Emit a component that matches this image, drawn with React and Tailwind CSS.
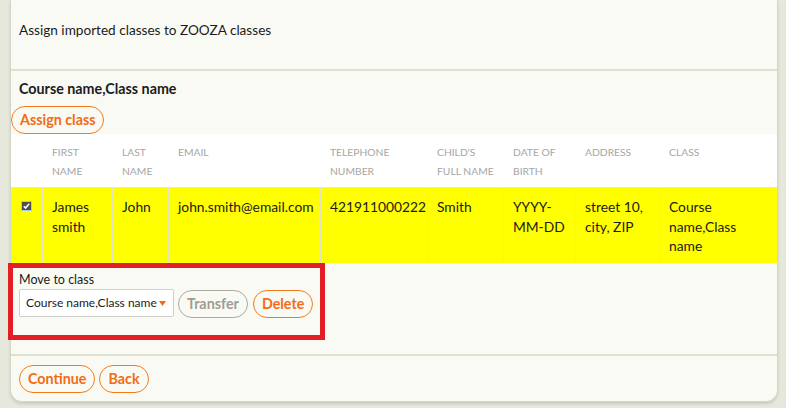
import React from 'react';

const cols = 'grid grid-cols-[32px_70px_56px_152px_107px_76px_72px_84px_117px]';

const headers = [
  [],
  ['First', 'name'],
  ['Last', 'name'],
  ['Email'],
  ['Telephone', 'number'],
  ["Child's", 'full name'],
  ['Date of', 'birth'],
  ['Address'],
  ['Class'],
];

const row = [
  ['James', 'smith'],
  ['John'],
  ['john.smith@email.com'],
  ['421911000222'],
  ['Smith'],
  ['YYYY-', 'MM-DD'],
  ['street 10,', 'city, ZIP'],
  ['Course', 'name,Class', 'name'],
];

function Pill({ children, muted = false }) {
  return (
    <button
      className={`h-[28px] rounded-full border px-[8px] text-[14.3px] font-bold leading-none ${
        muted ? 'border-[#a9a99f] text-[#9d9d96]' : 'border-[#f47a1f] text-[#f26c14]'
      }`}
    >
      {children}
    </button>
  );
}

function CheckBox() {
  return (
    <svg width="11" height="10" viewBox="0 0 11 10">
      <rect x="0" y="0" width="11" height="10" fill="#9ccfe6" />
      <rect x="1" y="1" width="9" height="8" fill="#4f4f4f" />
      <path d="M2.8 5.2 L4.6 7 L8.2 2.8" stroke="#fff" strokeWidth="1.6" fill="none" />
    </svg>
  );
}

export default function App() {
  return (
    <div className="min-h-[408px] bg-[#e7e8dc] pl-[10px] font-['Lato','Liberation_Sans',sans-serif] text-[#1b1b1b]">
      <div className="w-[768px] rounded-b-[12px] border border-t-0 border-[#d6d7c6] bg-[#f9faf4] shadow-[0_2px_3px_rgba(0,0,0,0.12)]">
        {/* intro */}
        <div className="h-[69px] pl-2 pt-[21px] text-[13.6px] leading-[18px]">
          Assign imported classes to ZOOZA classes
        </div>
        <div className="h-[2px] bg-[#dfe0cf]" />

        {/* class block */}
        <div className="pt-[9px]">
          <div className="pl-2 text-[14.3px] font-bold leading-[18px]">Course name,Class name</div>
          <div className="mt-[8px] flex">
            <Pill>Assign class</Pill>
          </div>
        </div>

        {/* table */}
        <div className={`${cols} h-[54px] border-b border-[#e4e4e0] bg-white`}>
          {headers.map((h, i) => (
            <div key={i} className="whitespace-nowrap pl-[9px] pt-[9px] text-[10.3px] uppercase leading-[18.5px] text-[#a6a6a2]">
              {h.map((l) => (
                <div key={l}>{l}</div>
              ))}
            </div>
          ))}
        </div>
        <div className={`${cols} h-[75px] bg-[#ffff00]`}>
          <div className="flex justify-center border-r border-[#e3e2c2] pt-[13px]">
            <CheckBox />
          </div>
          {row.map((c, i) => (
            <div
              key={i}
              className={`whitespace-nowrap pl-[9px] pt-[9px] text-[13.8px] leading-[19.5px] ${
                i < row.length - 1 ? 'border-r border-[#e3e2c2]' : ''
              }`}
            >
              {c.map((l) => (
                <div key={l}>{l}</div>
              ))}
            </div>
          ))}
        </div>

        {/* move to class */}
        <div className="relative h-[91px] px-2 pt-[9px]">
          <div className="text-[12.5px] leading-[16px]">Move to class</div>
          <div className="mt-[1px] flex items-start gap-[4px]">
            <div className="flex h-[28px] w-[155px] items-center gap-[2px] rounded-[2px] border border-[#cfcfcb] bg-white pl-[6px]">
              <span className="whitespace-nowrap text-[12px]">Course name,Class name</span>
              <svg width="7" height="5" viewBox="0 0 7 5" className="shrink-0">
                <path d="M0 0 H7 L3.5 5 Z" fill="#f26c14" />
              </svg>
            </div>
            <div className="mt-[1px] flex gap-[5px]">
              <Pill muted>Transfer</Pill>
              <Pill>Delete</Pill>
            </div>
          </div>
          <div className="pointer-events-none absolute left-[-3px] top-0 h-[77px] w-[317px] border-[5px] border-[#e31e24]" />
        </div>
        <div className="h-[2px] bg-[#dfe0cf]" />

        {/* footer */}
        <div className="flex gap-[4px] px-2 pb-[8px] pt-[9px]">
          <Pill>Continue</Pill>
          <Pill>Back</Pill>
        </div>
      </div>
    </div>
  );
}
